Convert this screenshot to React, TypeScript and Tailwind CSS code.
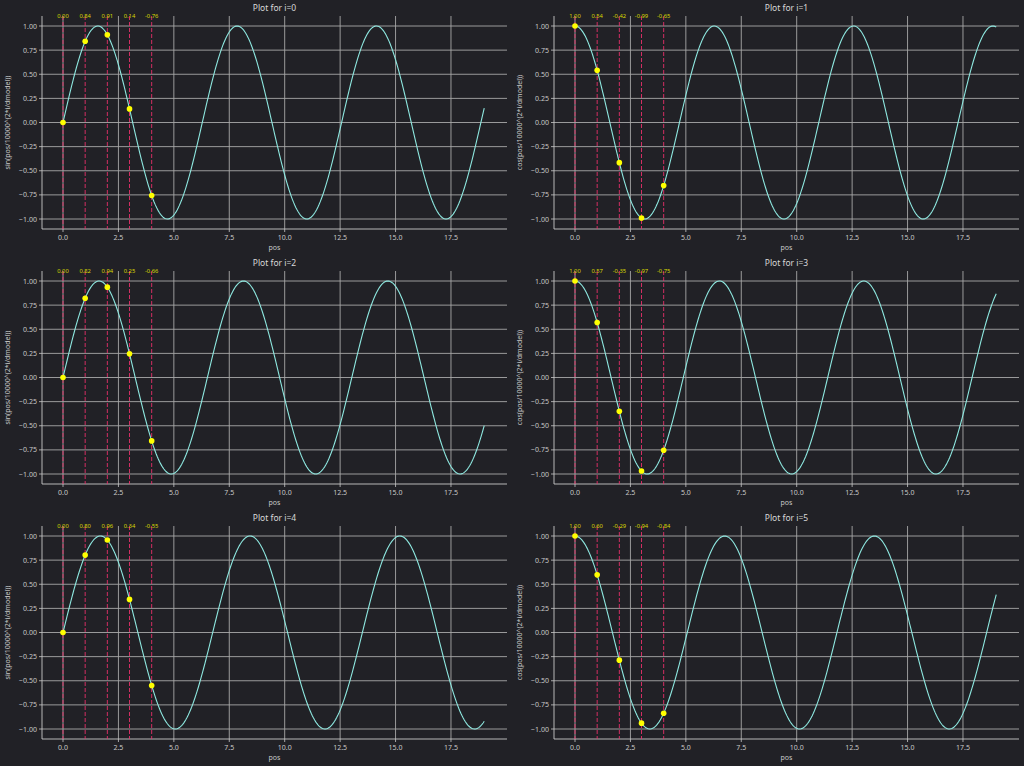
import React from "react";

const W = 512, H = 255;
const X0 = 63, SX = 22.17;
const AX_L = 42, AX_R = 507, AX_T = 16, AX_B = 229;
const Y1 = 26, YM1 = 219;
const yp = (v: number) => Y1 + (1 - v) * (YM1 - Y1) / 2;
const xp = (v: number) => X0 + v * SX;

function Plot({ i }: { i: number }) {
  const k = Math.floor(i / 2) * 2;
  const div = Math.pow(10000, k / 512);
  const f = (p: number) => (i % 2 === 0 ? Math.sin(p / div) : Math.cos(p / div));
  const pts: string[] = [];
  for (let p = 0; p <= 19.0001; p += 0.05) pts.push(`${xp(p).toFixed(2)},${yp(f(p)).toFixed(2)}`);
  const xt = [0, 2.5, 5, 7.5, 10, 12.5, 15, 17.5];
  const yt = [1, 0.75, 0.5, 0.25, 0, -0.25, -0.5, -0.75, -1];
  const fn = i % 2 === 0 ? "sin" : "cos";
  return (
    <svg width={W} height={H} viewBox={`0 0 ${W} ${H}`} className="font-['DejaVu_Sans',sans-serif]">
      <text x={(AX_L + AX_R) / 2} y={11} fill="#d8d8d8" fontSize="8.5" textAnchor="middle">Plot for i={i}</text>
      {xt.map(t => (
        <g key={t}>
          <line x1={xp(t)} x2={xp(t)} y1={AX_T} y2={AX_B} stroke="#a8a8a8" strokeWidth="0.9" />
          <line x1={xp(t)} x2={xp(t)} y1={AX_B} y2={AX_B + 3} stroke="#c8c8c8" strokeWidth="0.8" />
          <text x={xp(t)} y={AX_B + 11} fill="#c8c8c8" fontSize="7" textAnchor="middle">{t.toFixed(1)}</text>
        </g>
      ))}
      {yt.map(t => (
        <g key={t}>
          <line x1={AX_L} x2={AX_R} y1={yp(t)} y2={yp(t)} stroke="#a8a8a8" strokeWidth="0.9" />
          <line x1={AX_L - 3} x2={AX_L} y1={yp(t)} y2={yp(t)} stroke="#c8c8c8" strokeWidth="0.8" />
          <text x={AX_L - 5} y={yp(t) + 2.5} fill="#c8c8c8" fontSize="7" textAnchor="end">{(t < 0 ? "\u2212" : "") + Math.abs(t).toFixed(2)}</text>
        </g>
      ))}
      <line x1={AX_L} x2={AX_L} y1={AX_T} y2={AX_B} stroke="#c8c8c8" strokeWidth="0.9" />
      <line x1={AX_L} x2={AX_R} y1={AX_B} y2={AX_B} stroke="#c8c8c8" strokeWidth="0.9" />
      {[0, 1, 2, 3, 4].map(p => (
        <line key={p} x1={xp(p)} x2={xp(p)} y1={AX_T} y2={AX_B} stroke="#e8306a" strokeWidth="0.9" strokeDasharray="4 2" />
      ))}
      <polyline points={pts.join(" ")} fill="none" stroke="#8ee8e0" strokeWidth="1.1" />
      {[0, 1, 2, 3, 4].map(p => (
        <g key={p}>
          <circle cx={xp(p)} cy={yp(f(p))} r="2.8" fill="#ffff00" />
          <text x={xp(p)} y={AX_T + 2} fill="#d8d800" fontSize="5.8" textAnchor="middle">{f(p).toFixed(2)}</text>
        </g>
      ))}
      <text x={(AX_L + AX_R) / 2} y={AX_B + 21} fill="#c8c8c8" fontSize="7" textAnchor="middle">pos</text>
      <text transform={`translate(10 ${(AX_T + AX_B) / 2}) rotate(-90)`} fill="#c8c8c8" fontSize="7" textAnchor="middle">{fn}(pos/10000^(2*i/dmodel))</text>
    </svg>
  );
}

export default function App() {
  return (
    <div className="w-[1024px] h-[766px] bg-[#212126] grid grid-cols-[512px_512px] grid-rows-[255px_255px_255px] overflow-hidden">
      {[0, 1, 2, 3, 4, 5].map(i => <Plot key={i} i={i} />)}
    </div>
  );
}
